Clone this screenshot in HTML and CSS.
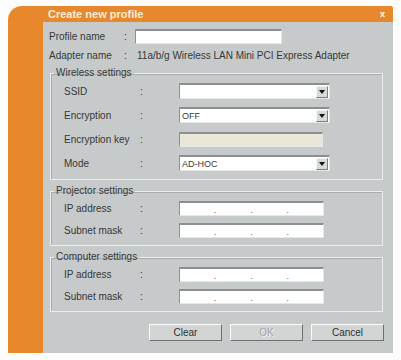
FILE: index.html
```html
<!DOCTYPE html>
<html lang="en">
<head>
    <meta charset="UTF-8" />
    <title>Create new profile</title>
    <link rel="stylesheet" href="styles.css">
</head>
<body>
    <div class="dialog">
        <div class="titlebar">
            <span class="title">Create new profile</span>
            <span class="close">x</span>
        </div>
        <div class="main">
            <div class="side"></div>
            <div class="panel">
                <div class="row top">
                    <span class="lbl">Profile name</span><span class="colon">:</span>
                    <span class="field profile"></span>
                </div>
                <div class="row top">
                    <span class="lbl">Adapter name</span><span class="colon">:</span>
                    <span class="value">11a/b/g Wireless LAN Mini PCI Express Adapter</span>
                </div>

                <fieldset class="group">
                    <legend>Wireless settings</legend>
                    <div class="row wl">
                        <span class="lbl">SSID</span><span class="colon">:</span>
                        <span class="field select"><span class="text"></span><span class="arrow"></span></span>
                    </div>
                    <div class="row wl">
                        <span class="lbl">Encryption</span><span class="colon">:</span>
                        <span class="field select"><span class="text">OFF</span><span class="arrow"></span></span>
                    </div>
                    <div class="row wl">
                        <span class="lbl">Encryption key</span><span class="colon">:</span>
                        <span class="field disabled"></span>
                    </div>
                    <div class="row wl">
                        <span class="lbl">Mode</span><span class="colon">:</span>
                        <span class="field select"><span class="text">AD-HOC</span><span class="arrow"></span></span>
                    </div>
                </fieldset>

                <fieldset class="group">
                    <legend>Projector settings</legend>
                    <div class="row ip">
                        <span class="lbl">IP address</span><span class="colon">:</span>
                        <span class="field addr"><span></span>.<span></span>.<span></span>.<span></span></span>
                    </div>
                    <div class="row ip">
                        <span class="lbl">Subnet mask</span><span class="colon">:</span>
                        <span class="field addr"><span></span>.<span></span>.<span></span>.<span></span></span>
                    </div>
                </fieldset>

                <fieldset class="group">
                    <legend>Computer settings</legend>
                    <div class="row ip">
                        <span class="lbl">IP address</span><span class="colon">:</span>
                        <span class="field addr"><span></span>.<span></span>.<span></span>.<span></span></span>
                    </div>
                    <div class="row ip">
                        <span class="lbl">Subnet mask</span><span class="colon">:</span>
                        <span class="field addr"><span></span>.<span></span>.<span></span>.<span></span></span>
                    </div>
                </fieldset>

                <div class="buttons">
                    <button>Clear</button>
                    <button class="off">OK</button>
                    <button>Cancel</button>
                </div>
            </div>
        </div>
    </div>
</body>
</html>
```
FILE: styles.css
```css
body {
    margin: 0;
    background: #fdfdfd;
    font-family: "Liberation Sans", Arial, sans-serif;
    font-size: 10px;
    color: #363838;
}
.dialog {
    margin: 6px 0 0 8px;
    width: 385px;
    background: #e8882c;
    border-radius: 14px 2px 0 0;
}
.titlebar {
    height: 16px;
    display: flex;
    align-items: center;
    justify-content: space-between;
    padding: 0 8px 0 40px;
}
.title {
    font-weight: bold;
    font-size: 11px;
    color: #fbeedd;
}
.close {
    font-size: 9px;
    font-weight: bold;
    color: #fff;
}
.main {
    display: flex;
}
.side {
    width: 35px;
}
.panel {
    flex: 1;
    height: 331px;
    background: #c7cacb;
    padding: 4px 0 0 6px;
    box-sizing: border-box;
}
.row {
    display: flex;
    align-items: center;
}
.row.top {
    height: 19px;
}
.row.top:first-child {
    height: 20px;
}
.row.top .lbl {
    width: 75px;
}
.row.top .colon {
    width: 11px;
}
.value {
    padding-left: 2px;
}
.field {
    display: block;
    box-sizing: border-box;
    height: 15px;
    background: #fff;
    border-top: 2px solid #8d8f90;
    border-left: 1px solid #8d8f90;
    border-right: 1px solid #e6e8e8;
    border-bottom: 1px solid #e6e8e8;
}
.profile {
    width: 147px;
}
.group {
    margin: 2px 10px 0 1px;
    padding: 0 0 4px 3px;
    border: 1px solid #eceeee;
    box-shadow: inset 1px 1px 0 #a9acad;
    min-width: 0;
}
.group + .group {
    margin-top: 5px;
}
.group legend {
    padding: 0 2px;
    height: 12px;
    line-height: 12px;
}
.row.wl {
    height: 24px;
    padding-left: 10px;
}
.row.ip {
    height: 22px;
    padding-left: 10px;
}
.group .lbl {
    width: 76px;
}
.group .colon {
    width: 39px;
}
.select {
    width: 151px;
    height: 16px;
    display: flex;
    align-items: center;
    justify-content: space-between;
    padding: 0 1px 0 2px;
    font-size: 9px;
}
.arrow {
    width: 12px;
    height: 12px;
    box-sizing: border-box;
    background: #d8dada;
    border: 1px solid;
    border-color: #f6f6f6 #7e8080 #7e8080 #f6f6f6;
    position: relative;
}
.arrow::after {
    content: "";
    position: absolute;
    left: 2px;
    top: 3px;
    border-left: 3px solid transparent;
    border-right: 3px solid transparent;
    border-top: 4px solid #111;
}
.disabled {
    width: 144px;
    background: #ebe7d8;
}
.addr {
    width: 145px;
    display: flex;
    align-items: flex-end;
    line-height: 10px;
    font-size: 9px;
    color: #555;
}
.addr span {
    flex: 1;
}
.buttons {
    display: flex;
    justify-content: flex-end;
    gap: 8px;
    margin: 12px 9px 0 0;
}
.buttons button {
    width: 73px;
    height: 17px;
    padding: 0;
    font-family: "Liberation Sans", Arial, sans-serif;
    font-size: 10px;
    color: #2e3030;
    background: #d3d5d5;
    border: 1px solid;
    border-color: #fbfbfb #6f7171 #6f7171 #fbfbfb;
}
.buttons button.off {
    color: #a2a4a4;
    text-shadow: 1px 1px 0 #f2f2f2;
}
```
